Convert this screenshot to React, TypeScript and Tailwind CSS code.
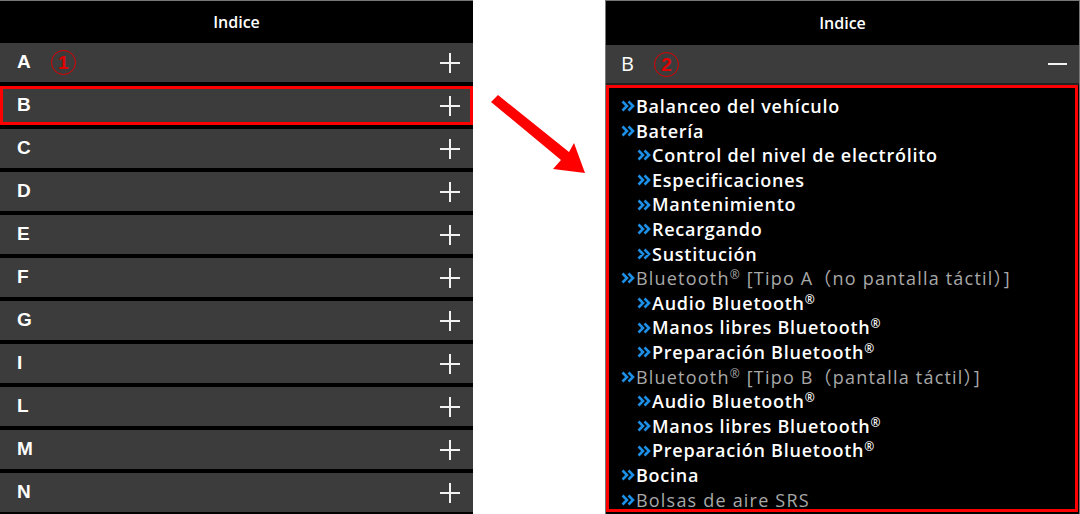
const LETTERS = ["A", "B", "C", "D", "E", "F", "G", "I", "L", "M", "N"];

type Entry = { text: string; sub?: boolean; muted?: boolean; reg?: boolean; tail?: string };

const ENTRIES: Entry[] = [
  { text: "Balanceo del vehículo" },
  { text: "Batería" },
  { text: "Control del nivel de electrólito", sub: true },
  { text: "Especificaciones", sub: true },
  { text: "Mantenimiento", sub: true },
  { text: "Recargando", sub: true },
  { text: "Sustitución", sub: true },
  { text: "Bluetooth", muted: true, reg: true, tail: " [Tipo A（no pantalla táctil）]" },
  { text: "Audio Bluetooth", sub: true, reg: true },
  { text: "Manos libres Bluetooth", sub: true, reg: true },
  { text: "Preparación Bluetooth", sub: true, reg: true },
  { text: "Bluetooth", muted: true, reg: true, tail: " [Tipo B（pantalla táctil）]" },
  { text: "Audio Bluetooth", sub: true, reg: true },
  { text: "Manos libres Bluetooth", sub: true, reg: true },
  { text: "Preparación Bluetooth", sub: true, reg: true },
  { text: "Bocina" },
  { text: "Bolsas de aire SRS", muted: true },
];

function Plus() {
  return (
    <svg width="20" height="20" viewBox="0 0 20 20">
      <path d="M10 0V20M0 10H20" stroke="#f2f2f2" strokeWidth="2" />
    </svg>
  );
}

function Chevron() {
  return (
    <svg width="15" height="12" viewBox="0 0 15 12" className="shrink-0">
      <path d="M1.5 1.5L6 6L1.5 10.5M7.5 1.5L12 6L7.5 10.5" stroke="#1e8fe6" strokeWidth="2.6" fill="none" />
    </svg>
  );
}

function Circled({ n }: { n: string }) {
  return (
    <span className="ml-[20px] flex h-[25px] w-[25px] items-center justify-center rounded-full border-[1.5px] border-[#e00000] font-['Liberation_Sans',sans-serif] text-[19px] font-bold leading-none text-[#e00000]">
      {n}
    </span>
  );
}

function LeftPanel() {
  return (
    <div className="flex h-[514px] w-[473px] flex-col border-t border-[#777] bg-black">
      <div className="flex h-[42px] shrink-0 items-center justify-center font-['Open_Sans',sans-serif] text-[16px] font-semibold text-white">
        Indice
      </div>
      <div className="flex flex-col gap-[4px]">
        {LETTERS.map((l) => (
          <div
            key={l}
            className={
              l === "B"
                ? "flex h-[39px] items-center justify-between border-[3px] border-[#ff0000] bg-[#3c3c3c] pl-[14px] pr-[10px]"
                : "flex h-[39px] items-center justify-between bg-[#3c3c3c] pl-[17px] pr-[13px]"
            }
          >
            <div className="flex items-center">
              <span className="font-['Liberation_Sans',sans-serif] text-[19px] font-bold text-white">{l}</span>
              {l === "A" && <Circled n="1" />}
            </div>
            <Plus />
          </div>
        ))}
      </div>
    </div>
  );
}

function Arrow() {
  return (
    <div className="w-[132px] pt-[80px]">
      <svg width="132" height="110" viewBox="0 0 132 110">
        <polygon points="18,22 25,15 96,72 101,63 112,93 80,89 88,80" fill="#ff0000" />
      </svg>
    </div>
  );
}

function RightPanel() {
  return (
    <div className="flex h-[514px] w-[475px] flex-col border-l border-t border-r border-[#777] bg-black">
      <div className="flex h-[44px] shrink-0 items-center justify-center font-['Open_Sans',sans-serif] text-[16px] font-semibold text-white">
        Indice
      </div>
      <div className="flex h-[40px] shrink-0 items-center justify-between border-b-2 border-[#222] bg-[#3c3c3c] pl-[15px] pr-[12px]">
        <div className="flex items-center">
          <span className="font-['Open_Sans',sans-serif] text-[20px] text-white">B</span>
          <Circled n="2" />
        </div>
        <div className="h-[2px] w-[19px] bg-[#f2f2f2]" />
      </div>
      <div className="mb-[2px] mr-[1px] flex-1 overflow-hidden border-[3px] border-[#ff0000] pl-[12px] pt-[6px] font-['Open_Sans',sans-serif] text-[18px]">
        {ENTRIES.map((e, i) => (
          <div
            key={i}
            className={
              e.sub
                ? "flex h-[24.6px] items-center whitespace-nowrap pl-[16px] leading-[24.6px]"
                : "flex h-[24.6px] items-center whitespace-nowrap leading-[24.6px]"
            }
          >
            <Chevron />
            <span
              className={
                e.muted
                  ? "tracking-[1.2px] text-[#a8a8a8]"
                  : "font-semibold tracking-[0.75px] text-white"
              }
            >
              {e.text}
              {e.reg && <span className="relative top-[-6px] text-[12px] leading-none">®</span>}
              {e.tail && (
                <span className="font-['Open_Sans','Noto_Sans_CJK_JP',sans-serif]">{e.tail}</span>
              )}
            </span>
          </div>
        ))}
      </div>
    </div>
  );
}

export default function App() {
  return (
    <div className="flex h-[514px] w-[1080px] bg-white">
      <LeftPanel />
      <Arrow />
      <RightPanel />
    </div>
  );
}
